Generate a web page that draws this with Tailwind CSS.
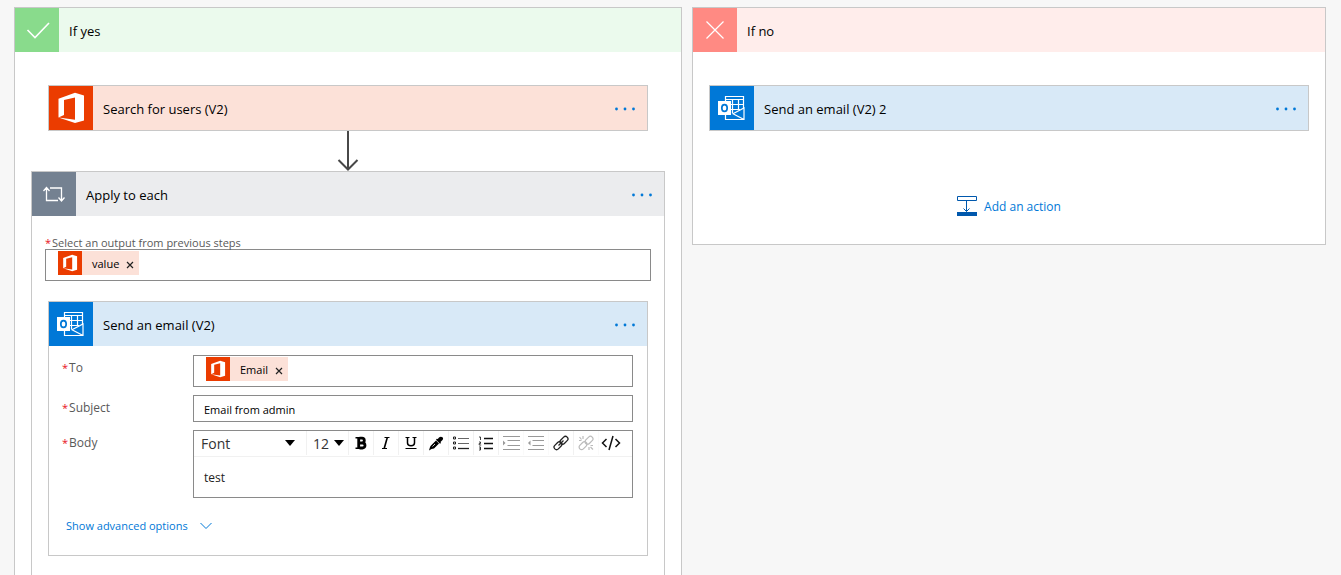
<!DOCTYPE html>
<html lang="en">
<head>
    <meta charset="UTF-8">
    <meta name="viewport" content="width=device-width, initial-scale=1.0">
    <title>Flow designer</title>
    <script src="https://cdn.jsdelivr.net/npm/@tailwindcss/browser@4"></script>
</head>
<body class="bg-[#f7f7f7] text-black font-['Open_Sans','Noto_Sans',sans-serif] text-[13px]">
    <!-- Shared icons -->
    <svg class="hidden" aria-hidden="true">
        <symbol id="office" viewBox="0 0 44 44">
            <path fill="#fff" d="M9.5 31.5 15 29V14l11-2.6v22.3L9.5 31.5 26 37l9-2.4V9.4L26 6.8 9.5 12.8z"/>
        </symbol>
        <symbol id="outlook" viewBox="0 0 44 44">
            <g fill="none" stroke="#fff" stroke-width="1.2">
                <path d="M15.5 15v-4.500h18V22M15.500 13.500h18M21 18.500h12.500M21 23.500h9M22.500 13.500V27M28.500 13.500V24"/>
                <path d="M15.500 28v5.500h18.500V22l-11 5.800 11 5.700"/>
            </g>
            <path fill="#fff" d="M8 15h13v14H8z"/>
            <ellipse cx="14.5" cy="22" rx="2.7" ry="3.4" fill="none" stroke="#0078d7" stroke-width="1.7"/>
        </symbol>
        <symbol id="dots" viewBox="0 0 22 4">
            <g fill="#0078d7"><circle cx="2.5" cy="2" r="1.4"/><circle cx="11" cy="2" r="1.4"/><circle cx="19.5" cy="2" r="1.4"/></g>
        </symbol>
    </svg>

    <main class="grid grid-cols-[668fr_634fr] gap-[10px] min-h-screen pt-[7px] pl-[14px] pr-[15px]">
        <!-- If yes -->
        <section class="flex flex-col bg-white border border-b-0 border-[#c8c8c8]">
            <header class="flex items-center h-11 bg-[#ebfaed]">
                <span class="flex items-center justify-center size-11 bg-[#89db8c]">
                    <svg class="size-11" viewBox="0 0 44 44" fill="none" stroke="#fff" stroke-width="1.6"><path d="M12.5 22 20 29.5 34 15"/></svg>
                </span>
                <h2 class="ml-[10px] pt-1">If yes</h2>
            </header>

            <div class="flex flex-col flex-1 px-4 pt-[33px]">
                <article class="flex items-center mx-[17px] border border-[#c8c8c8] bg-[#fce1d8]">
                    <svg class="size-11 bg-[#eb3c00]"><use href="#office"/></svg>
                    <h3 class="ml-[10px] pt-1 flex-1">Search for users (V2)</h3>
                    <button type="button" aria-label="Search for users menu" class="mr-[11px] pt-0.5 cursor-pointer"><svg class="w-[22px] h-1"><use href="#dots"/></svg></button>
                </article>

                <svg class="w-6 h-10 mx-auto" viewBox="0 0 24 40" fill="none" stroke="#484848" stroke-width="2"><path d="M12 0v38.500M2.500 29 12 38.500 21.500 29"/></svg>

                <!-- Apply to each -->
                <article class="flex flex-col flex-1 border border-b-0 border-[#c8c8c8]">
                    <header class="flex items-center h-11 bg-[#ebecee]">
                        <span class="flex items-center justify-center size-11 bg-[#748191]">
                            <svg class="size-11" viewBox="0 0 44 44" fill="none" stroke="#fff" stroke-width="1.3"><path d="M14.500 16v12.500H26M11.500 19l3-3.500 3 3.500M18 16h11.500v12M26.500 25.500l3 3.500 3-3.500"/></svg>
                        </span>
                        <h3 class="ml-[10px] pt-1 flex-1">Apply to each</h3>
                        <button type="button" aria-label="Apply to each menu" class="mr-[11px] pt-0.5 cursor-pointer"><svg class="w-[22px] h-1"><use href="#dots"/></svg></button>
                    </header>

                    <div class="px-[13px] pt-[21px]">
                        <label for="output" class="block text-[11px] leading-3 text-[#595959]"><span class="mr-px text-[#e81123]">*</span>Select an output from previous steps</label>
                        <div class="flex h-8 border border-[#8a8a8a] pl-3 pt-px">
                            <span class="flex items-center h-6 pr-[5px] bg-[#fce1d8] text-[11px]">
                                <svg class="size-6 mr-[10px] bg-[#eb3c00]"><use href="#office"/></svg>
                                <span class="pt-0.5">value</span>
                                <button type="button" aria-label="Remove value" class="ml-[7px] pt-1 cursor-pointer"><svg class="size-2" viewBox="0 0 8 8" stroke="#222" stroke-width="1.2"><path d="M1 1l6 6M7 1 1 7"/></svg></button>
                            </span>
                            <input id="output" type="text" class="flex-1 min-w-0 outline-none">
                        </div>
                    </div>

                    <!-- Send an email -->
                    <article class="mx-4 mt-5 border border-[#c8c8c8]">
                        <header class="flex items-center h-11 bg-[#d8e9f7]">
                            <svg class="size-11 bg-[#0078d7]"><use href="#outlook"/></svg>
                            <h3 class="ml-[10px] pt-1 flex-1">Send an email (V2)</h3>
                            <button type="button" aria-label="Send an email menu" class="mr-[11px] pt-0.5 cursor-pointer"><svg class="w-[22px] h-1"><use href="#dots"/></svg></button>
                        </header>

                        <form class="grid grid-cols-[131px_1fr] gap-y-2 pt-[9px] pl-[13px] pr-[14px] pb-5 text-[12px]">
                            <label for="to" class="pt-1 text-[#595959]"><span class="mr-px text-[11px] text-[#e81123]">*</span>To</label>
                            <div class="flex h-8 border border-[#8a8a8a] pl-3 pt-px">
                                <span class="flex items-center h-6 pr-[5px] bg-[#fce1d8] text-[11px]">
                                    <svg class="size-6 mr-[10px] bg-[#eb3c00]"><use href="#office"/></svg>
                                    <span class="pt-0.5">Email</span>
                                    <button type="button" aria-label="Remove Email" class="ml-[7px] pt-1 cursor-pointer"><svg class="size-2" viewBox="0 0 8 8" stroke="#222" stroke-width="1.2"><path d="M1 1l6 6M7 1 1 7"/></svg></button>
                                </span>
                                <input id="to" type="text" class="flex-1 min-w-0 outline-none">
                            </div>

                            <label for="subject" class="pt-1 text-[#595959]"><span class="mr-px text-[11px] text-[#e81123]">*</span>Subject</label>
                            <input id="subject" type="text" value="Email from admin" class="h-[27px] px-[10px] pt-px border border-[#8a8a8a] text-[11px]">

                            <label for="body" class="pt-1 text-[#595959]"><span class="mr-px text-[11px] text-[#e81123]">*</span>Body</label>
                            <div class="border border-[#8a8a8a]">
                                <div class="flex items-start h-[26px] border-b border-[#f1f1f1] pl-px text-[14px] text-[#333]">
                                    <div class="relative w-28 border-r border-[#f1f1f1]">
                                        <select aria-label="Font" class="appearance-none w-full h-6 pl-[6px] outline-none"><option>Font</option></select>
                                        <svg class="absolute right-[11px] top-2 w-[10px] h-2 pointer-events-none" viewBox="0 0 10 8"><path d="M0 1h10L5 7z"/></svg>
                                    </div>
                                    <div class="relative w-[42px] border-r border-[#f1f1f1]">
                                        <select aria-label="Font size" class="appearance-none w-full h-6 pl-[6px] outline-none"><option>12</option></select>
                                        <svg class="absolute right-1 top-2 w-[10px] h-2 pointer-events-none" viewBox="0 0 10 8"><path d="M0 1h10L5 7z"/></svg>
                                    </div>
                                    <button type="button" aria-label="Bold" class="w-[25px] h-6 border-r border-[#f1f1f1]"><svg class="size-4 m-auto" viewBox="0 0 16 16" fill="none" stroke="#000"><path stroke-width="1.500" d="M2.500 2.800h7M2.500 13.200h7"/><path stroke-width="2.800" d="M5.700 3v10M6.500 3.200H9a2.200 2.200 0 0 1 0 4.600H6.500M6.500 8h3a2.500 2.500 0 0 1 0 5h-3"/></svg></button>
                                    <button type="button" aria-label="Italic" class="w-[25px] h-6 border-r border-[#f1f1f1]"><svg class="size-4 m-auto" viewBox="0 0 16 16" fill="none" stroke="#000"><path d="M6.500 2.500h5M4 13.500h5"/><path stroke-width="1.600" d="M9.300 2.500 6.200 13.500"/></svg></button>
                                    <button type="button" aria-label="Underline" class="w-[25px] h-6 border-r border-[#f1f1f1]"><svg class="size-4 m-auto" viewBox="0 0 16 16" fill="none" stroke="#000"><path d="M2.500 2.500h4M9.500 2.500h4M2.500 13.500h11"/><path stroke-width="1.500" d="M4.500 2.500V8c0 3.600 7 3.600 7 0V2.500"/></svg></button>
                                    <button type="button" aria-label="Text color" class="w-[25px] h-6 border-r border-[#f1f1f1]"><svg class="size-4 m-auto" viewBox="0 0 16 16"><path d="M11 2.500c2-2 5.500 0 3.500 2.500l-2 2 .5 1-1 .8-4-4 .8-1 1 .3zM8 5.500l3 3-5 5-2.500.5L1 15.500l.7-2.500.8-2z"/><path stroke="#fff" stroke-width=".8" d="M4.500 11.500 7 9"/></svg></button>
                                    <button type="button" aria-label="Bulleted list" class="w-[25px] h-6 border-r border-[#f1f1f1]"><svg class="size-4 m-auto" viewBox="0 0 16 16" fill="none" stroke="#222"><path stroke="#666" d="M5 3.500h11M5 8.500h11"/><path stroke-width="1.300" d="M5 13.500h11"/><path d="M.5 2h2v2h-2zM.5 7h2v2h-2zM.5 12h2v2h-2z"/></svg></button>
                                    <button type="button" aria-label="Numbered list" class="w-[25px] h-6 border-r border-[#f1f1f1]"><svg class="size-4 m-auto" viewBox="0 0 16 16" fill="none" stroke="#111"><path stroke-width="1.400" d="M6 3.500h9M6 8.500h9M6 13.500h9"/><path stroke-width=".8" d="M1 2h1.500v3M1 7h1.500v1.500H1.200V10h2M1 12h1.500v3H1M1.500 13.500h1"/></svg></button>
                                    <button type="button" aria-label="Increase indent" disabled class="w-[25px] h-6 border-r border-[#fafafa]"><svg class="w-[18px] h-4 m-auto" viewBox="0 0 18 16" fill="none" stroke="#999"><path d="M1 1.500h17M5.500 5.500h12.500M5.500 10.500h12.500M1 14.500h17"/><path fill="#999" stroke="none" d="M1 5.500 3.500 8 1 10.500z"/></svg></button>
                                    <button type="button" aria-label="Decrease indent" disabled class="w-[25px] h-6 border-r border-[#fafafa]"><svg class="w-[18px] h-4 m-auto" viewBox="0 0 18 16" fill="none" stroke="#999"><path d="M1 1.500h16M5.500 5.500h11.500M5.500 10.500h11.500M1 14.500h16"/><path fill="#999" stroke="none" d="M3.500 5.500 1 8l2.500 2.500z"/></svg></button>
                                    <button type="button" aria-label="Link" class="w-[25px] h-6 border-r border-[#f1f1f1]"><svg class="size-4 m-auto" viewBox="0 0 16 16" fill="none" stroke="#222" stroke-width="1.300"><rect x="6.500" y="2.800" width="9" height="5" rx="2.500" transform="rotate(-45 11 5.300)"/><rect x=".5" y="8.200" width="9" height="5" rx="2.500" transform="rotate(-45 5 10.700)"/><path d="M5.500 10.500l5-5"/></svg></button>
                                    <button type="button" aria-label="Unlink" disabled class="w-[25px] h-6 border-r border-[#fafafa]"><svg class="size-4 m-auto" viewBox="0 0 16 16" fill="none" stroke="#bbb" stroke-width="1.200"><rect x="6.500" y="2.800" width="9" height="5" rx="2.500" transform="rotate(-45 11 5.300)"/><rect x=".5" y="8.200" width="9" height="5" rx="2.500" transform="rotate(-45 5 10.700)"/><path d="M5 1v3M1.500 2l2 2.500M1 5.500h2.500M11 12v3M12.500 12l2.500 2.500M12.500 10.500H15"/></svg></button>
                                    <button type="button" aria-label="Code view" class="w-6 h-6"><svg class="w-5 h-4 m-auto" viewBox="0 0 20 16" fill="none" stroke="#111" stroke-width="1.500"><path d="M5.500 4 1.500 8l4 4M14.500 4l4 4-4 4M12 1 8 15"/></svg></button>
                                </div>
                                <textarea id="body" class="block w-full h-10 px-[10px] pt-3 resize-none outline-none text-[12px] text-[#222]">test</textarea>
                            </div>

                            <a href="#" class="col-span-2 flex items-center gap-3 mt-[11px] ml-1 text-[11px] leading-[18px] text-[#0078d7]">
                                Show advanced options
                                <svg class="w-3 h-2" viewBox="0 0 12 8" fill="none" stroke="#0078d7"><path d="M.5 1 6 6.500 11.500 1"/></svg>
                            </a>
                        </form>
                    </article>
                </article>
            </div>
        </section>

        <!-- If no -->
        <section class="self-start bg-white border border-[#c8c8c8]">
            <header class="flex items-center h-11 bg-[#ffedeb]">
                <span class="flex items-center justify-center size-11 bg-[#ff8a83]">
                    <svg class="size-11" viewBox="0 0 44 44" fill="none" stroke="#fff" stroke-width="1.200"><path d="M13.500 13.500l17 17M30.500 13.500l-17 17"/></svg>
                </span>
                <h2 class="ml-[10px] pt-1">If no</h2>
            </header>

            <div class="px-4 pt-[33px] pb-[27px]">
                <article class="flex items-center border border-[#c8c8c8] bg-[#d8e9f7]">
                    <svg class="size-11 bg-[#0078d7]"><use href="#outlook"/></svg>
                    <h3 class="ml-[10px] pt-1 flex-1">Send an email (V2) 2</h3>
                    <button type="button" aria-label="Send an email 2 menu" class="mr-[11px] pt-0.5 cursor-pointer"><svg class="w-[22px] h-1"><use href="#dots"/></svg></button>
                </article>
                <button type="button" class="flex items-center gap-[7px] mx-auto mt-16 text-[12px] leading-5 text-[#0078d7] cursor-pointer">
                    <svg class="w-5 h-5" viewBox="0 0 20 20" fill="none" stroke="#0058ad"><path d="M.5.500h19v4H.500zM9.500 4.500v11M6.500 12.500l3 3 3-3"/><path fill="#0058ad" stroke="none" d="M0 16h20v4H0z"/></svg>
                    <span class="pt-0.5">Add an action</span>
                </button>
            </div>
        </section>
    </main>
</body>
</html>
